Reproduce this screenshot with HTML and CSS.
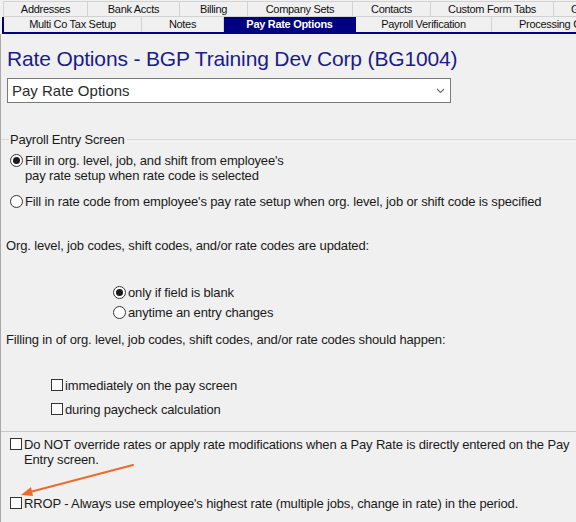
FILE: index.html
```html
<!DOCTYPE html>
<html lang="en">
<head>
    <meta charset="UTF-8">
    <title>Rate Options</title>
    <link rel="stylesheet" href="styles.css">
</head>
<body>
<div class="tabs">
    <div class="tab-row back">
        <div class="tab t-addresses">Addresses</div>
        <div class="tab t-bank">Bank Accts</div>
        <div class="tab t-billing">Billing</div>
        <div class="tab t-company">Company Sets</div>
        <div class="tab t-contacts">Contacts</div>
        <div class="tab t-custom">Custom Form Tabs</div>
        <div class="tab t-more">G</div>
    </div>
    <div class="tab-row front">
        <div class="tab t-multi">Multi Co Tax Setup</div>
        <div class="tab t-notes">Notes</div>
        <div class="tab t-payrate selected">Pay Rate Options</div>
        <div class="tab t-verify">Payroll Verification</div>
        <div class="tab t-processing">Processing C</div>
    </div>
</div>

<div class="panel">
    <h1 class="title">Rate Options - BGP Training Dev Corp (BG1004)</h1>

    <div class="select">
        <span>Pay Rate Options</span>
        <svg class="chevron" width="9" height="6" viewBox="0 0 9 6">
            <path d="M1 1 L4.5 4.5 L8 1" fill="none" stroke="#6d6d6d" stroke-width="1.2"/>
        </svg>
    </div>

    <div class="group-head">
        <span class="group-line short"></span>
        <span class="group-label">Payroll Entry Screen</span>
        <span class="group-line"></span>
    </div>

    <div class="opt opt-fill1">
        <span class="radio checked"></span>
        <span class="opt-text">Fill in org. level, job, and shift from employee's<br>pay rate setup when rate code is selected</span>
    </div>
    <div class="opt opt-fill2">
        <span class="radio"></span>
        <span class="opt-text">Fill in rate code from employee's pay rate setup when org. level, job or shift code is specified</span>
    </div>

    <div class="caption cap-updated">Org. level, job codes, shift codes, and/or rate codes are updated:</div>

    <div class="opt opt-blank">
        <span class="radio checked"></span>
        <span class="opt-text">only if field is blank</span>
    </div>
    <div class="opt opt-anytime">
        <span class="radio"></span>
        <span class="opt-text">anytime an entry changes</span>
    </div>

    <div class="caption cap-filling">Filling in of org. level, job codes, shift codes, and/or rate codes should happen:</div>

    <div class="opt opt-immediate">
        <span class="check"></span>
        <span class="opt-text">immediately on the pay screen</span>
    </div>
    <div class="opt opt-during">
        <span class="check"></span>
        <span class="opt-text">during paycheck calculation</span>
    </div>

    <div class="separator"></div>

    <div class="opt opt-override">
        <span class="check"></span>
        <span class="opt-text">Do NOT override rates or apply rate modifications when a Pay Rate is directly entered on the Pay<br>Entry screen.</span>
    </div>
    <div class="opt opt-rrop">
        <span class="check"></span>
        <span class="opt-text">RROP - Always use employee's highest rate (multiple jobs, change in rate) in the period.</span>
    </div>
</div>

<!-- annotation arrow drawn over the form -->
<svg class="arrow" width="576" height="522" viewBox="0 0 576 522">
    <line x1="133" y1="465" x2="30" y2="492" stroke="#ec6a2c" stroke-width="2" stroke-linecap="round"/>
    <path d="M21 495 L31 487 L33 496 Z" fill="#ec6a2c"/>
</svg>
</body>
</html>
```

FILE: styles.css
```css
body {
    margin: 0;
    width: 576px;
    height: 522px;
    overflow: hidden;
    position: relative;
    background: #f0f0f0;
    font-family: "Liberation Sans", Arial, sans-serif;
    font-size: 13px;
    color: #1a1a1a;
}

/* tab strip */
.tabs {
    padding: 1px 0 0 3px;
}

.tab-row {
    display: flex;
    box-sizing: border-box;
}

.tab-row.back {
    height: 16px;
}

.tab-row.front {
    height: 17px;
    border-left: 2px solid #000080;
    border-bottom: 2px solid #000080;
    margin-left: -1px;
}

.tab {
    flex: none;
    box-sizing: border-box;
    border: 1px solid #d2d2d2;
    border-left: none;
    background: #f0f0f0;
    text-align: center;
    font-size: 11px;
    letter-spacing: -0.3px;
    line-height: 14px;
    color: #111;
    white-space: nowrap;
    overflow: hidden;
}

.back .tab:first-child {
    border-left: 1px solid #d2d2d2;
}

.front .tab {
    border-top: none;
    border-bottom: none;
    line-height: 15px;
}

.tab.selected {
    background: #000080;
    color: #fff;
    font-weight: bold;
    border-color: #000080;
}

.t-addresses { width: 85px; }
.t-bank { width: 92px; }
.t-billing { width: 68px; }
.t-company { width: 105px; }
.t-contacts { width: 78px; }
.t-custom { width: 123px; }
.t-more { width: 40px; text-align: left; padding-left: 17px; }

.t-multi { width: 138px; }
.t-notes { width: 82px; }
.t-payrate { width: 132px; }
.t-verify { width: 136px; }
.t-processing { width: 100px; text-align: left; padding-left: 27px; }

/* content panel */
.panel {
    border-left: 1px solid #a9a9a9;
    height: 488px;
    box-sizing: border-box;
}

.title {
    margin: 0;
    padding: 12px 0 0 6px;
    font-size: 21px;
    font-weight: normal;
    line-height: 26px;
    color: #1b1b8a;
    letter-spacing: -0.15px;
    white-space: nowrap;
}

.select {
    display: flex;
    align-items: center;
    justify-content: space-between;
    box-sizing: border-box;
    width: 444px;
    height: 25px;
    margin: 6px 0 0 6px;
    padding: 0 5px 0 4px;
    background: #fff;
    border: 1px solid #7a7a7a;
    font-size: 15px;
    color: #2b2b2b;
}

.group-head {
    display: flex;
    align-items: center;
    margin-top: 29px;
    height: 15px;
}

.group-line {
    flex: 1;
    border-top: 1px solid #d9d9d9;
}

.group-line.short {
    flex: none;
    width: 8px;
}

.group-label {
    padding: 0 2px 0 1px;
    line-height: 15px;
    letter-spacing: -0.2px;
}

.opt {
    display: flex;
    align-items: flex-start;
    line-height: 15px;
    letter-spacing: -0.15px;
    white-space: nowrap;
}

.caption {
    padding-left: 5px;
    line-height: 15px;
    letter-spacing: -0.15px;
    white-space: nowrap;
}

.radio {
    flex: none;
    box-sizing: border-box;
    width: 13px;
    height: 13px;
    margin: 1px 2px 0 0;
    border: 1px solid #333;
    border-radius: 50%;
    background: #fff;
    position: relative;
}

.radio.checked::after {
    content: "";
    position: absolute;
    left: 2px;
    top: 2px;
    width: 7px;
    height: 7px;
    border-radius: 50%;
    background: #1a1a1a;
}

.check {
    flex: none;
    box-sizing: border-box;
    width: 12px;
    height: 12px;
    margin: 1px 2px 0 0;
    border: 1px solid #333;
    background: #fff;
}

.opt-fill1 { margin: 6px 0 0 9px; }
.opt-fill2 { margin: 11px 0 0 9px; }
.cap-updated { margin-top: 29px; }
.opt-blank { margin: 32px 0 0 112px; }
.opt-anytime { margin: 5px 0 0 112px; }
.cap-filling { margin-top: 12px; }
.opt-immediate { margin: 31px 0 0 50px; }
.opt-during { margin: 9px 0 0 50px; }

.separator {
    margin-top: 14px;
    border-top: 1px solid #c8c8c8;
}

.opt-override { margin: 5px 0 0 9px; }
.opt-rrop { margin: 29px 0 0 9px; }

.arrow {
    position: absolute;
    left: 0;
    top: 0;
    pointer-events: none;
}
```
